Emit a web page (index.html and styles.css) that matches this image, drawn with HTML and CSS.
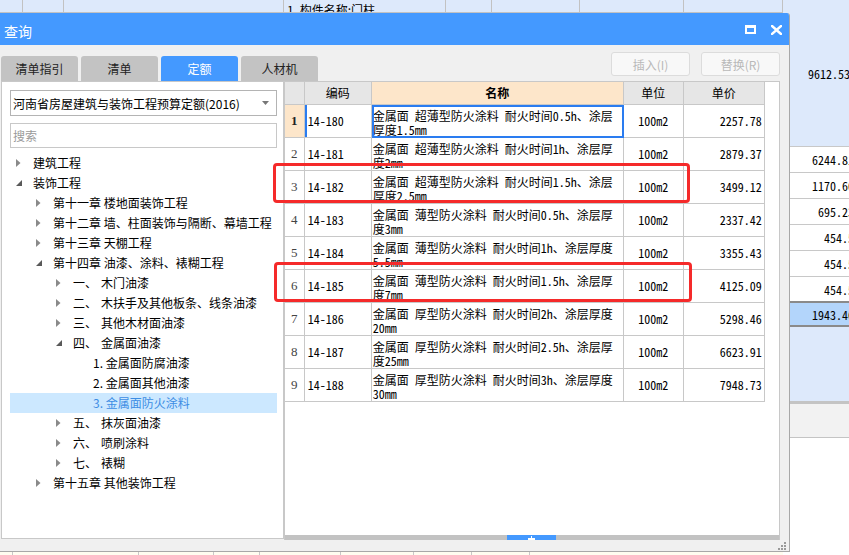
FILE: index.html
```html
<!DOCTYPE html>
<html lang="zh-CN">
<head>
<meta charset="utf-8">
<title>查询</title>
<link rel="stylesheet" href="styles.css">
</head>
<body>
<div class="desk">
  <div class="bg-main">
    <div class="bg-strip">
      <span class="bc c1"></span><span class="bc c2"></span><span class="bc c3"></span>
      <span class="bc c4">1. 构件名称:门柱</span><span class="bc c5"></span><span class="bc c6"></span>
      <span class="bc c7"></span><span class="bc c8"></span>
    </div>
    <div class="bg-fill"></div>
    <div class="bg-foot">
      <span class="bf f1"></span><span class="bf f2"></span><span class="bf f3"></span><span class="bf f4"></span>
      <span class="bf f5"></span><span class="bf f6"></span><span class="bf f7"></span><span class="bf f8"></span>
    </div>
  </div>
  <div class="bg-side">
    <div class="sc big">9612.53</div>
    <div class="sc">6244.81</div>
    <div class="sc">1170.60</div>
    <div class="sc">695.23</div>
    <div class="sc">454.5</div>
    <div class="sc">454.5</div>
    <div class="sc last">454.5</div>
    <div class="sc hl">1943.46</div>
    <div class="sc blue"></div>
    <div class="sc gray"></div>
  </div>

  <div class="dialog">
    <div class="titlebar">
      <span class="title">查询</span>
      <span class="wbtns">
        <svg class="ico" width="11" height="9" viewBox="0 0 11 9"><rect x="1" y="1.5" width="9" height="6.5" fill="none" stroke="#fff" stroke-width="2"/><rect x="0" y="0" width="11" height="3" fill="#fff"/></svg>
        <svg class="ico" width="11" height="10" viewBox="0 0 11 10"><path d="M1 1L10 9M10 1L1 9" stroke="#fff" stroke-width="2.4" stroke-linecap="square"/></svg>
      </span>
    </div>
    <div class="dbody">
      <div class="toolbar">
        <div class="tabs">
          <div class="tab">清单指引</div>
          <div class="tab">清单</div>
          <div class="tab active">定额</div>
          <div class="tab">人材机</div>
        </div>
        <div class="btns">
          <button class="btn" disabled>插入(I)</button>
          <button class="btn" disabled>替换(R)</button>
        </div>
      </div>
      <div class="content">
        <div class="lpanel">
          <div class="select">
            <span>河南省房屋建筑与装饰工程预算定额(2016)</span>
            <svg width="7" height="4" viewBox="0 0 7 4"><path d="M0 0H7L3.5 4Z" fill="#777"/></svg>
          </div>
          <div class="search">搜索</div>
          <div class="tree">
            <div class="tn l0"><span class="tw"><svg width="5" height="8" viewBox="0 0 5 8"><path d="M0 0L4.5 4L0 8Z" fill="#8a8a8a"/></svg></span>建筑工程</div>
            <div class="tn l0"><span class="tw"><svg width="6" height="6" viewBox="0 0 6 6"><path d="M6 0V6H0Z" fill="#595959"/></svg></span>装饰工程</div>
            <div class="tn l1"><span class="tw"><svg width="5" height="8" viewBox="0 0 5 8"><path d="M0 0L4.5 4L0 8Z" fill="#8a8a8a"/></svg></span>第十一章 楼地面装饰工程</div>
            <div class="tn l1"><span class="tw"><svg width="5" height="8" viewBox="0 0 5 8"><path d="M0 0L4.5 4L0 8Z" fill="#8a8a8a"/></svg></span>第十二章 墙、柱面装饰与隔断、幕墙工程</div>
            <div class="tn l1"><span class="tw"><svg width="5" height="8" viewBox="0 0 5 8"><path d="M0 0L4.5 4L0 8Z" fill="#8a8a8a"/></svg></span>第十三章 天棚工程</div>
            <div class="tn l1"><span class="tw"><svg width="6" height="6" viewBox="0 0 6 6"><path d="M6 0V6H0Z" fill="#595959"/></svg></span>第十四章 油漆、涂料、裱糊工程</div>
            <div class="tn l2"><span class="tw"><svg width="5" height="8" viewBox="0 0 5 8"><path d="M0 0L4.5 4L0 8Z" fill="#8a8a8a"/></svg></span><span class="num">一、</span>木门油漆</div>
            <div class="tn l2"><span class="tw"><svg width="5" height="8" viewBox="0 0 5 8"><path d="M0 0L4.5 4L0 8Z" fill="#8a8a8a"/></svg></span><span class="num">二、</span>木扶手及其他板条、线条油漆</div>
            <div class="tn l2"><span class="tw"><svg width="5" height="8" viewBox="0 0 5 8"><path d="M0 0L4.5 4L0 8Z" fill="#8a8a8a"/></svg></span><span class="num">三、</span>其他木材面油漆</div>
            <div class="tn l2"><span class="tw"><svg width="6" height="6" viewBox="0 0 6 6"><path d="M6 0V6H0Z" fill="#595959"/></svg></span><span class="num">四、</span>金属面油漆</div>
            <div class="tn l3"><span class="tw"></span>1. 金属面防腐油漆</div>
            <div class="tn l3"><span class="tw"></span>2. 金属面其他油漆</div>
            <div class="tn l3 sel"><span class="tw"></span>3. 金属面防火涂料</div>
            <div class="tn l2"><span class="tw"><svg width="5" height="8" viewBox="0 0 5 8"><path d="M0 0L4.5 4L0 8Z" fill="#8a8a8a"/></svg></span><span class="num">五、</span>抹灰面油漆</div>
            <div class="tn l2"><span class="tw"><svg width="5" height="8" viewBox="0 0 5 8"><path d="M0 0L4.5 4L0 8Z" fill="#8a8a8a"/></svg></span><span class="num">六、</span>喷刷涂料</div>
            <div class="tn l2"><span class="tw"><svg width="5" height="8" viewBox="0 0 5 8"><path d="M0 0L4.5 4L0 8Z" fill="#8a8a8a"/></svg></span><span class="num">七、</span>裱糊</div>
            <div class="tn l1"><span class="tw"><svg width="5" height="8" viewBox="0 0 5 8"><path d="M0 0L4.5 4L0 8Z" fill="#8a8a8a"/></svg></span>第十五章 其他装饰工程</div>
          </div>
        </div>
        <div class="rpanel">
          <table class="grid">
            <colgroup><col class="k0"><col class="k1"><col class="k2"><col class="k3"><col class="k4"></colgroup>
            <thead>
              <tr><th></th><th>编码</th><th class="hname">名称</th><th>单位</th><th>单价</th></tr>
            </thead>
            <tbody>
              <tr class="cur"><td class="rn">1</td><td class="code">14-180</td><td class="name"><div>金属面 超薄型防火涂料 耐火时间0.5h、涂层<br>厚度1.5mm</div></td><td class="unit">100m2</td><td class="price">2257.78</td></tr>
              <tr><td class="rn">2</td><td class="code">14-181</td><td class="name"><div>金属面 超薄型防火涂料 耐火时间1h、涂层厚<br>度2mm</div></td><td class="unit">100m2</td><td class="price">2879.37</td></tr>
              <tr><td class="rn">3</td><td class="code">14-182</td><td class="name"><div>金属面 超薄型防火涂料 耐火时间1.5h、涂层<br>厚度2.5mm</div></td><td class="unit">100m2</td><td class="price">3499.12</td></tr>
              <tr><td class="rn">4</td><td class="code">14-183</td><td class="name"><div>金属面 薄型防火涂料 耐火时间0.5h、涂层厚<br>度3mm</div></td><td class="unit">100m2</td><td class="price">2337.42</td></tr>
              <tr><td class="rn">5</td><td class="code">14-184</td><td class="name"><div>金属面 薄型防火涂料 耐火时间1h、涂层厚度<br>5.5mm</div></td><td class="unit">100m2</td><td class="price">3355.43</td></tr>
              <tr><td class="rn">6</td><td class="code">14-185</td><td class="name"><div>金属面 薄型防火涂料 耐火时间1.5h、涂层厚<br>度7mm</div></td><td class="unit">100m2</td><td class="price">4125.09</td></tr>
              <tr><td class="rn">7</td><td class="code">14-186</td><td class="name"><div>金属面 厚型防火涂料 耐火时间2h、涂层厚度<br>20mm</div></td><td class="unit">100m2</td><td class="price">5298.46</td></tr>
              <tr><td class="rn">8</td><td class="code">14-187</td><td class="name"><div>金属面 厚型防火涂料 耐火时间2.5h、涂层厚<br>度25mm</div></td><td class="unit">100m2</td><td class="price">6623.91</td></tr>
              <tr><td class="rn">9</td><td class="code">14-188</td><td class="name"><div>金属面 厚型防火涂料 耐火时间3h、涂层厚度<br>30mm</div></td><td class="unit">100m2</td><td class="price">7948.73</td></tr>
            </tbody>
          </table>
          <div class="rfill"></div>
          <div class="hscroll"><div class="thumb"><svg width="7" height="4" viewBox="0 0 7 4"><path d="M3 0H4V2H7V4H0V2H3Z" fill="#fff"/></svg></div></div>
        </div>
      </div>
      <div class="footer">
        <svg class="grip" width="8" height="8" viewBox="0 0 8 8"><g fill="#9a9a9a"><rect x="6" y="0" width="2" height="2"/><rect x="3" y="3" width="2" height="2"/><rect x="6" y="3" width="2" height="2"/><rect x="0" y="6" width="2" height="2"/><rect x="3" y="6" width="2" height="2"/><rect x="6" y="6" width="2" height="2"/></g></svg>
      </div>
    </div>
  </div>

  <div class="mark m1"></div>
  <div class="mark m2"></div>
</div>
</body>
</html>
```

FILE: styles.css
```css
* { box-sizing: border-box; }
html, body { margin: 0; padding: 0; }
body {
  font-family: "Noto Sans CJK SC", "Microsoft YaHei", sans-serif;
  font-size: 12px;
  color: #000;
  background: #fff;
}

.desk {
  position: relative;
  width: 849px;
  height: 555px;
  overflow: hidden;
  display: flex;
}

/* ---------- background spreadsheet ---------- */
.bg-main {
  width: 783px;
  flex-shrink: 0;
  display: flex;
  flex-direction: column;
}
.bg-strip {
  display: flex;
  height: 13px;
  background: #dde9fb;
  border-bottom: 1px solid #c2c2c2;
}
.bc {
  height: 12px;
  border-right: 1px solid #c2c2c2;
  font-size: 12px;
  line-height: 12px;
  padding: 4px 0 0 3px;
  white-space: nowrap;
  overflow: hidden;
}
.c1 { width: 23px; }
.c2 { width: 41px; }
.c3 { width: 220px; }
.c4 { width: 162px; }
.c5 { width: 46px; }
.c6 { width: 88px; }
.c7 { width: 104px; }
.c8 { flex: 1; }
.bg-fill { flex: 1; }
.bg-foot {
  height: 4px;
  display: flex;
  background: #fffdf0;
}
.bf { height: 4px; border-right: 1px solid #c8c8c8; }
.f1 { width: 13px; }
.f2 { width: 126px; }
.f3 { width: 75px; }
.f4 { width: 46px; }
.f5 { width: 81px; }
.f6 { width: 73px; }
.f7 { width: 58px; }
.f8 { width: 58px; }

.bg-side {
  width: 72px;
  flex-shrink: 0;
  display: flex;
  flex-direction: column;
  font-family: "Noto Sans Mono CJK SC", "DejaVu Sans Mono", monospace;
  font-size: 12px;
}
.sc {
  height: 26px;
  border-bottom: 1px solid #c8c8c8;
  display: flex;
  align-items: center;
  justify-content: flex-end;
  padding-right: 1px;
  background: #fff;
  white-space: nowrap;
}
.sc.big { height: 147px; background: #dde9fb; padding-right: 5px; }
.sc.last { height: 24px; border-bottom: none; }
.sc.hl {
  height: 26px;
  background: #b3d5fb;
  border-top: 2px solid #8a8a8a;
  border-bottom: 2px solid #8a8a8a;
}
.sc.blue { height: 77px; background: #dde9fb; border-bottom: 3px solid #c4c4c4; }
.sc.gray { height: 34px; background: #f2f2f2; border-bottom: 1px solid #c4c4c4; }

/* ---------- dialog ---------- */
.dialog {
  position: absolute;
  left: 0;
  top: 13px;
  width: 790px;
  height: 539px;
  background: #f0f0f0;
  border-right: 1px solid #a8a8a8;
  border-bottom: 1px solid #a8a8a8;
  border-top-right-radius: 3px;
  display: flex;
  flex-direction: column;
  overflow: hidden;
}
.titlebar {
  height: 32px;
  flex-shrink: 0;
  background: #4499ff;
  color: #fff;
  display: flex;
  align-items: center;
  justify-content: space-between;
  padding: 0 7px 0 4px;
}
.title { font-size: 14px; line-height: 14px; padding-top: 4px; }
.wbtns { display: flex; align-items: center; gap: 15px; padding-top: 1px; }
.ico { display: block; }

.dbody {
  flex: 1;
  display: flex;
  flex-direction: column;
  padding: 0 9px 0 1px;
}
.toolbar {
  height: 36px;
  flex-shrink: 0;
  display: flex;
  justify-content: space-between;
}
.tabs { display: flex; gap: 3px; align-self: flex-end; }
.tab {
  width: 77px;
  height: 25px;
  background: #c3c3c3;
  color: #222;
  border-radius: 3px 3px 0 0;
  font-size: 12px;
  line-height: 25px;
  text-align: center;
}
.tab.active { background: #4499ff; color: #fff; }
.btns { display: flex; gap: 11px; padding-top: 7px; }
.btn {
  width: 79px;
  height: 24px;
  background: #f8f8f8;
  border: 1px solid #dcdcdc;
  border-radius: 3px;
  color: #b8b8b8;
  font-family: "Noto Sans CJK SC", sans-serif;
  font-size: 12px;
  padding: 0;
}

.content {
  height: 459px;
  flex-shrink: 0;
  display: flex;
  align-items: flex-start;
}
.lpanel {
  width: 283px;
  height: 458px;
  background: #fff;
  border: 1px solid #c8c8c8;
  padding: 8px 6px 0 8px;
}
.select {
  height: 26px;
  border: 1px solid #b4b4b4;
  display: flex;
  align-items: center;
  justify-content: space-between;
  padding: 0 7px 0 2px;
  font-size: 12px;
  line-height: 13px;
  white-space: nowrap;
}
.search {
  margin-top: 7px;
  height: 25px;
  border: 1px solid #c8c8c8;
  color: #9a9a9a;
  font-size: 12px;
  line-height: 23px;
  padding-left: 2px;
}
.tree { margin-top: 5px; }
.tn {
  height: 20px;
  display: flex;
  align-items: center;
  font-size: 12px;
  line-height: 20px;
  white-space: nowrap;
}
.tw { width: 17px; flex-shrink: 0; display: flex; align-items: center; }
.tw svg { display: block; }
.l0 { padding-left: 6px; }
.l1 { padding-left: 26px; }
.l2 { padding-left: 46px; }
.l3 { padding-left: 66px; }
.num { width: 28px; flex-shrink: 0; }
.tn.sel { background: #cce8ff; color: #3d8de4; }

.rpanel {
  width: 497px;
  height: 459px;
  background: #fff;
  border: 1px solid #c8c8c8;
  border-bottom: none;
  display: flex;
  flex-direction: column;
}
.grid {
  width: 480px;
  table-layout: fixed;
  border-collapse: separate;
  border-spacing: 0;
  flex-shrink: 0;
}
.k0 { width: 20px; }
.k1 { width: 67px; }
.k2 { width: 252px; }
.k3 { width: 60px; }
.k4 { width: 81px; }
.grid th, .grid td {
  border-right: 1px solid #c8c8c8;
  border-bottom: 1px solid #c8c8c8;
  padding: 0;
  white-space: nowrap;
  overflow: hidden;
}
.grid th {
  height: 23px;
  background: #e6e6e6;
  font-weight: normal;
  font-size: 12px;
  line-height: 12px;
  text-align: center;
}
.grid th.hname { background: #fde6ca; font-weight: bold; }
.grid td {
  height: 33px;
  font-family: "Noto Sans Mono CJK SC", "DejaVu Sans Mono", monospace;
  font-size: 12px;
  line-height: 14px;
}
.grid td.rn {
  text-align: center;
  color: #444;
  font-family: "Liberation Serif", serif;
  font-size: 13px;
}
.grid tr.cur td.rn { background: #fde6ca; font-weight: bold; color: #222; }
.grid td.code { padding-left: 3px; }
.grid tr.cur td.code { box-shadow: inset 2px 0 0 #2a7cf0; }
.grid td.name { vertical-align: top; }
.grid td.name div { padding: 4px 0 0 1px; height: 32px; overflow: hidden; }
.grid tr.cur td.name { outline: 2px solid #2a7cf0; outline-offset: -2px; }
.grid td.unit { text-align: center; }
.grid td.price { text-align: right; padding-right: 2px; }

.rfill { flex: 1; }
.hscroll {
  height: 5px;
  background: #c2c2c2;
  padding-left: 222px;
  display: flex;
}
.thumb {
  width: 49px;
  height: 5px;
  background: #4499ff;
  display: flex;
  justify-content: center;
  align-items: flex-end;
}
.thumb svg { display: block; }

.footer {
  flex: 1;
  display: flex;
  justify-content: flex-end;
  align-items: flex-end;
  padding: 0 0 1px 0;
}
.grip { display: block; margin-right: -6px; }

/* ---------- annotation marks ---------- */
.mark {
  position: absolute;
  border: 3px solid #f52a2a;
  border-radius: 4px;
}
.m1 { left: 273px; top: 163px; width: 417px; height: 40px; }
.m2 { left: 274px; top: 262px; width: 418px; height: 40px; }
```
